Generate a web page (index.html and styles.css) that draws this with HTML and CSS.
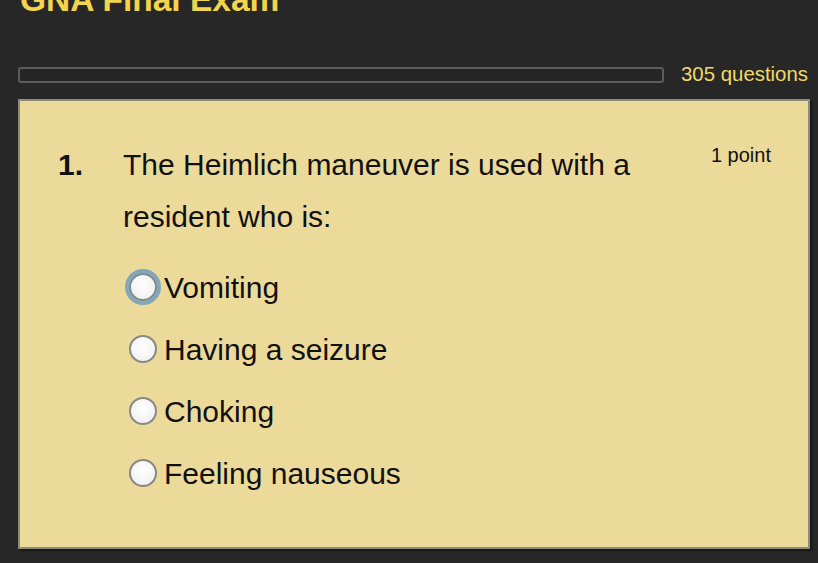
FILE: index.html
```html
<!DOCTYPE html>
<html lang="en">
<head>
<meta charset="utf-8">
<title>GNA Final Exam</title>
<link rel="stylesheet" href="styles.css">
</head>
<body>
<div class="page">
  <h1 class="title">GNA Final Exam</h1>
  <div class="progress-row">
    <div class="progress"><div class="progress-fill"></div></div>
    <div class="count">305 questions</div>
  </div>
  <div class="card">
    <div class="question">
      <div class="num">1.</div>
      <div class="qtext">The Heimlich maneuver is used with a resident who is:</div>
      <div class="points">1 point</div>
    </div>
    <div class="options">
      <label class="option"><span class="radio focused"></span><span class="opt-text">Vomiting</span></label>
      <label class="option"><span class="radio"></span><span class="opt-text">Having a seizure</span></label>
      <label class="option"><span class="radio"></span><span class="opt-text">Choking</span></label>
      <label class="option"><span class="radio"></span><span class="opt-text">Feeling nauseous</span></label>
    </div>
  </div>
</div>
</body>
</html>
```

FILE: styles.css
```css
html, body {
  margin: 0;
  padding: 0;
  background: #272727;
  font-family: "Liberation Sans", Arial, sans-serif;
}
.page {
  padding: 0 8px 0 18px;
  overflow: hidden;
  height: 563px;
  box-sizing: border-box;
}
.title {
  margin: -19px 0 0 2px;
  font-size: 33.5px;
  font-weight: bold;
  color: #f2d54c;
  line-height: 38px;
}
.progress-row {
  display: flex;
  align-items: center;
  gap: 17px;
  margin-top: 44px;
}
.progress {
  flex: 1;
  height: 16px;
  box-sizing: border-box;
  border: 2px solid #5c5c5c;
  border-radius: 3px;
  background: #262626;
}
.progress-fill {
  width: 0;
  height: 100%;
}
.count {
  font-size: 20.4px;
  color: #f0d96a;
  line-height: 23px;
  padding-right: 2px;
}
.card {
  margin-top: 13px;
  background: #ecda9b;
  border: 2px solid #8e8b7c;
  padding: 38px 37px 43px 38px;
  height: 450px;
  box-sizing: border-box;
  box-shadow: 2px 2px 2px rgba(0,0,0,0.4);
}
.question {
  display: grid;
  grid-template-columns: 65px 1fr auto;
  column-gap: 40px;
  align-items: start;
}
.num {
  font-size: 30px;
  font-weight: bold;
  line-height: 52px;
  color: #111;
}
.qtext {
  font-size: 30px;
  line-height: 52px;
  color: #111;
  margin-left: -40px;
}
.points {
  font-size: 20px;
  line-height: 23px;
  color: #111;
  margin-top: 5px;
}
.options {
  display: flex;
  flex-direction: column;
  margin-top: 13px;
  padding-left: 71px;
}
.option {
  display: flex;
  align-items: center;
  gap: 7px;
  height: 62px;
}
.radio {
  width: 28px;
  height: 28px;
  box-sizing: border-box;
  border: 2.5px solid #8a8884;
  border-radius: 50%;
  background: radial-gradient(circle at 50% 40%, #ffffff 0%, #f2f2f4 70%, #e4e4e8 100%);
  flex: none;
}
.radio.focused {
  box-shadow: 0 0 0 4px #82a6ba;
  border-color: #7d8a90;
}
.opt-text {
  font-size: 30px;
  color: #111;
  line-height: 35px;
}
```
